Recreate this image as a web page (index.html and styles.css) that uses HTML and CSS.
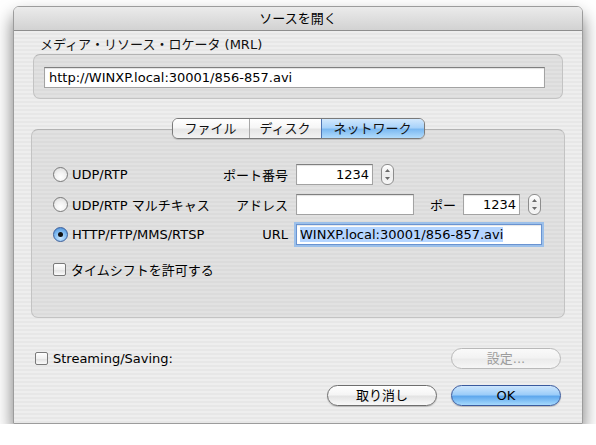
FILE: index.html
```html
<!DOCTYPE html>
<html lang="ja">
<head>
<meta charset="utf-8">
<title>ソースを開く</title>
<link rel="stylesheet" href="styles.css">
</head>
<body>
<div class="window">
  <div class="titlebar">ソースを開く</div>
  <div class="content">
    <div class="mrl-label">メディア・リソース・ロケータ (MRL)</div>
    <div class="group mrl-group">
      <div class="field mrl-field">http://WINXP.local:30001/856-857.avi</div>
    </div>

    <div class="tabview">
      <div class="tabs">
        <span class="tab tab-file">ファイル</span>
        <span class="tab tab-disc">ディスク</span>
        <span class="tab tab-net selected">ネットワーク</span>
      </div>
      <div class="group tab-group">
        <div class="row">
          <div class="opt"><span class="radio"></span>UDP/RTP</div>
          <div class="lbl">ポート番号</div>
          <div class="field num w77">1234</div>
          <span class="stepper"><svg width="13" height="21" viewBox="0 0 13 21"><path d="M4 8 L6.5 5 L9 8 Z" fill="#6a6a6a"/><path d="M4 13 L6.5 16 L9 13 Z" fill="#6a6a6a"/></svg></span>
        </div>
        <div class="row">
          <div class="opt"><span class="radio"></span>UDP/RTP マルチキャス</div>
          <div class="lbl">アドレス</div>
          <div class="field w118"></div>
          <div class="lbl2">ポー</div>
          <div class="field num w57">1234</div>
          <span class="stepper"><svg width="13" height="21" viewBox="0 0 13 21"><path d="M4 8 L6.5 5 L9 8 Z" fill="#6a6a6a"/><path d="M4 13 L6.5 16 L9 13 Z" fill="#6a6a6a"/></svg></span>
        </div>
        <div class="row">
          <div class="opt"><span class="radio on"><span class="dot"></span></span>HTTP/FTP/MMS/RTSP</div>
          <div class="lbl">URL</div>
          <div class="field focus w244"><span class="sel">WINXP.local:30001/856-857.avi</span></div>
        </div>
        <div class="row check-row">
          <div class="opt"><span class="checkbox"></span>タイムシフトを許可する</div>
        </div>
      </div>
    </div>

    <div class="stream-row">
      <div class="opt"><span class="checkbox"></span>Streaming/Saving:</div>
      <span class="button disabled">設定...</span>
    </div>
    <div class="button-row">
      <span class="button">取り消し</span>
      <span class="button default">OK</span>
    </div>
  </div>
</div>
</body>
</html>
```

FILE: styles.css
```css
html, body {
  margin: 0;
  background: #ffffff;
}
body {
  padding: 6px 0 0 13px;
  font-family: "DejaVu Sans", "Noto Sans CJK JP", sans-serif;
  font-size: 13px;
  color: #000;
}
.window {
  width: 570px;
  height: 418px;
  box-sizing: border-box;
  border-radius: 6px 6px 0 0;
  border: 1px solid #9c9c9c;
  box-shadow: 0 10px 18px rgba(0, 0, 0, 0.55);
  display: flex;
  flex-direction: column;
  overflow: hidden;
}
.titlebar {
  height: 23px;
  line-height: 23px;
  text-align: center;
  font-size: 13px;
  background: linear-gradient(#ebebeb, #d2d2d2);
  border-bottom: 1px solid #8e8e8e;
  flex: none;
}
.content {
  flex: 1;
  padding: 0 17px 0 17px;
  background: repeating-linear-gradient(to bottom, #eeeeee 0, #eeeeee 2px, #e7e7e7 2px, #e7e7e7 4px);
  display: flex;
  flex-direction: column;
}
.mrl-label {
  margin: 6px 0 1px 9px;
  line-height: 16px;
  color: #111;
}
.group {
  background: rgba(0, 0, 0, 0.05);
  border: 1px solid #c3c3c3;
  border-top-color: #b3b3b3;
  border-radius: 7px;
}
.mrl-group {
  margin: 0 2px;
  height: 45px;
  box-sizing: border-box;
  padding: 12px 17px 0 10px;
}
.field {
  height: 21px;
  box-sizing: border-box;
  background: #fff;
  border: 1px solid #a3a3a3;
  border-top-color: #7f7f7f;
  box-shadow: inset 0 1px 1px rgba(0, 0, 0, 0.12);
  line-height: 19px;
  padding: 0 4px;
  white-space: nowrap;
  overflow: hidden;
}
.mrl-field {
  width: 100%;
}
.tabview {
  margin-top: 19px;
  display: flex;
  flex-direction: column;
  align-items: center;
}
.tabs {
  position: relative;
  z-index: 1;
  display: flex;
  height: 21px;
  box-sizing: border-box;
  margin-bottom: -10px;
  border: 1px solid #7a7a7a;
  border-radius: 6px;
  overflow: hidden;
  box-shadow: 0 1px 1px rgba(0, 0, 0, 0.15);
}
.tab {
  line-height: 19px;
  text-align: center;
  background: linear-gradient(#ffffff 0%, #f6f6f6 45%, #e6e6e6 55%, #f3f3f3 100%);
  color: #111;
}
.tab-file { width: 76px; border-right: 1px solid #a8a8a8; }
.tab-disc { width: 71px; border-right: 1px solid #4f76b4; }
.tab-net { width: 102px; }
.tab.selected {
  background: linear-gradient(#d2e8fd 0%, #a9d3fa 45%, #7cb9f1 55%, #b2dcfc 100%);
}
.tab-group {
  align-self: stretch;
  height: 189px;
  box-sizing: border-box;
  padding: 34px 0 0 21px;
  display: flex;
  flex-direction: column;
  gap: 9px;
}
.row {
  display: flex;
  align-items: center;
  height: 21px;
}
.check-row {
  margin-top: 5px;
}
.opt {
  width: 163px;
  display: flex;
  align-items: center;
  white-space: nowrap;
}
.lbl {
  width: 72px;
  text-align: right;
  margin-right: 8px;
  white-space: nowrap;
}
.lbl2 {
  margin: 0 4px 0 16px;
  width: 29px;
  white-space: nowrap;
}
.num {
  text-align: right;
  padding-right: 3px;
}
.w77 { width: 77px; }
.w118 { width: 118px; }
.w57 { width: 57px; }
.w244 { width: 246px; }
.focus {
  border: 1px solid #6a93d0;
  box-shadow: 0 0 0 2px #9cc0ea, inset 0 1px 1px rgba(0, 0, 0, 0.1);
  padding-left: 3px;
}
.sel {
  background: #b5d5ff;
}
.stepper {
  margin-left: 8px;
  width: 13px;
  height: 21px;
  box-sizing: border-box;
  border: 1px solid #8d8d8d;
  border-radius: 6px;
  background: linear-gradient(#ffffff, #ececec 50%, #f7f7f7);
  display: flex;
  align-items: center;
  justify-content: center;
  overflow: hidden;
}
.stepper svg {
  display: block;
  flex: none;
}
.radio {
  width: 15px;
  height: 15px;
  box-sizing: border-box;
  border-radius: 50%;
  border: 1px solid #7a7a7a;
  background: radial-gradient(circle at 50% 70%, #ffffff 0%, #f2f2f2 45%, #d6d6d6 100%);
  margin-right: 4px;
  display: flex;
  align-items: center;
  justify-content: center;
  flex: none;
}
.radio.on {
  border-color: #3d5f9a;
  background: radial-gradient(circle at 50% 75%, #c9e6ff 0%, #7cb8ef 55%, #3f83cf 100%);
}
.dot {
  width: 5px;
  height: 5px;
  border-radius: 50%;
  background: #111;
}
.checkbox {
  width: 13px;
  height: 13px;
  box-sizing: border-box;
  border: 1px solid #7a7a7a;
  border-radius: 2px;
  background: linear-gradient(#ffffff, #f0f0f0 50%, #e2e2e2 55%, #fafafa);
  margin-right: 5px;
  flex: none;
}
.stream-row {
  margin-top: 30px;
  height: 21px;
  display: flex;
  align-items: center;
  justify-content: space-between;
  padding: 0 4px 0 4px;
}
.button-row {
  margin-top: 16px;
  height: 21px;
  display: flex;
  justify-content: flex-end;
  gap: 14px;
  padding-right: 4px;
}
.button {
  width: 110px;
  height: 21px;
  box-sizing: border-box;
  border: 1px solid #6e6e6e;
  border-radius: 11px;
  background: linear-gradient(#ffffff 0%, #f5f5f5 45%, #e4e4e4 55%, #f9f9f9 100%);
  text-align: center;
  line-height: 19px;
  box-shadow: 0 1px 1px rgba(0, 0, 0, 0.2);
}
.button.disabled {
  border-color: #b9b9b9;
  color: #9c9c9c;
  background: linear-gradient(#fafafa 0%, #f3f3f3 45%, #ebebeb 55%, #f6f6f6 100%);
  box-shadow: none;
}
.button.default {
  border-color: #3a5a9e;
  background: linear-gradient(#cde6fd 0%, #9ccdf9 45%, #5fa8ed 55%, #a6dafd 100%);
}
```
